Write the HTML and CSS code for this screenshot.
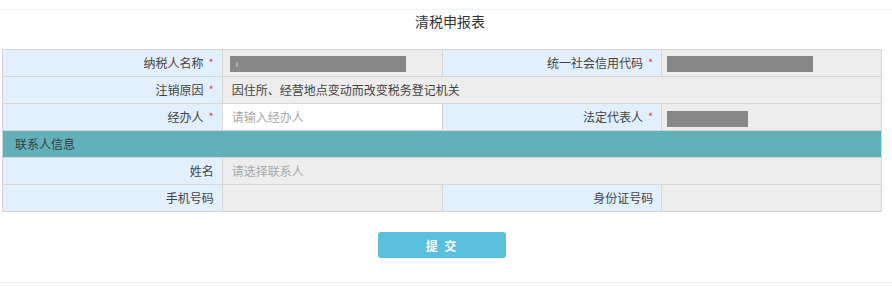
FILE: index.html
```html
<!DOCTYPE html>
<html lang="zh-CN">
<head>
<meta charset="utf-8">
<title>清税申报表</title>
<link rel="stylesheet" href="styles.css">
</head>
<body>
<div class="page">
  <div class="title">清税申报表</div>
  <table class="form">
    <colgroup>
      <col class="c1"><col class="c2"><col class="c3"><col class="c4">
    </colgroup>
    <tr>
      <td class="lbl">纳税人名称<span class="req">*</span></td>
      <td class="val"><span class="mask mask-name"><span class="caret">ı</span></span></td>
      <td class="lbl">统一社会信用代码<span class="req">*</span></td>
      <td class="val"><span class="mask mask-code"></span></td>
    </tr>
    <tr>
      <td class="lbl">注销原因<span class="req">*</span></td>
      <td class="val" colspan="3">因住所、经营地点变动而改变税务登记机关</td>
    </tr>
    <tr>
      <td class="lbl">经办人<span class="req">*</span></td>
      <td class="val input"><span class="ph">请输入经办人</span></td>
      <td class="lbl">法定代表人<span class="req">*</span></td>
      <td class="val"><span class="mask mask-rep"></span></td>
    </tr>
    <tr>
      <td class="section" colspan="4">联系人信息</td>
    </tr>
    <tr>
      <td class="lbl plain">姓名</td>
      <td class="val" colspan="3"><span class="ph">请选择联系人</span></td>
    </tr>
    <tr>
      <td class="lbl plain">手机号码</td>
      <td class="val"></td>
      <td class="lbl plain">身份证号码</td>
      <td class="val"></td>
    </tr>
  </table>
  <div class="actions">
    <button class="submit" type="button">提 交</button>
  </div>
</div>
</body>
</html>
```

FILE: styles.css
```css
html, body {
  margin: 0;
  padding: 0;
  background: #ffffff;
}
body {
  font-family: "Noto Sans CJK SC", "Noto Sans", sans-serif;
  font-size: 12px;
  color: #555;
}
.page {
  margin-top: 9px;
  border-top: 1px solid #edf2f7;
  border-bottom: 1px solid #e8f0f7;
  height: 272px;
}
.title {
  text-align: center;
  font-size: 14px;
  line-height: 22px;
  color: #333;
  padding-left: 8px;
}
.form {
  margin: 17px 0 0 2px;
  width: 880px;
  border-collapse: collapse;
  table-layout: fixed;
}
.form td {
  border: 1px solid #d6d6d6;
  height: 26px;
  padding: 0;
  vertical-align: middle;
  line-height: 16px;
}
.lbl {
  background: #e2f0fd;
  text-align: right;
  padding-right: 8px !important;
  color: #444;
}
.lbl.plain {
  padding-right: 8px !important;
}
.req {
  color: #e8404a;
  margin-left: 5px;
  font-size: 11px;
  position: relative;
  top: -1px;
}
.val {
  background: #ededed;
  padding-left: 9px !important;
  color: #444;
}
.val.input {
  background: #ffffff;
}
.ph {
  color: #a9a9a9;
}
.mask {
  display: inline-block;
  background: #888888;
  height: 16px;
  vertical-align: middle;
}
.mask-name {
  width: 176px;
  margin-left: -2px;
  position: relative;
}
.caret {
  position: absolute;
  left: 6px;
  top: 0;
  color: #ddd;
  font-size: 9px;
}
.mask-code {
  width: 146px;
  margin-left: -4px;
}
.mask-rep {
  width: 81px;
  margin-left: -4px;
  margin-top: 4px;
}
.section {
  background: #62b1ba;
  color: #3a3a3a;
  padding-left: 12px !important;
  text-align: left;
}
.actions {
  display: flex;
  justify-content: center;
  margin-top: 20px;
  padding-right: 8px;
}
.submit {
  width: 128px;
  height: 26px;
  border: none;
  border-radius: 3px;
  background: #5bc0de;
  color: #ffffff;
  font-family: "Noto Sans CJK SC", sans-serif;
  font-size: 12px;
  font-weight: bold;
  letter-spacing: 2px;
  padding: 0;
}
```
